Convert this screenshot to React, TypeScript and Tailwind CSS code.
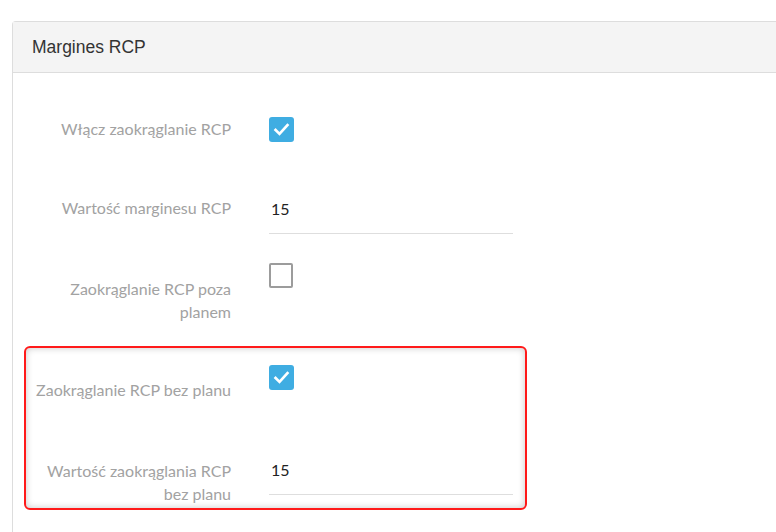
import React from "react";

const labelCls =
  "text-right text-[16px] text-[#a2a2a2] font-['Lato',sans-serif]";

const CheckMark: React.FC<{ checked: boolean }> = ({ checked }) =>
  checked ? (
    <div className="flex h-[25px] w-[25px] items-center justify-center rounded-[3px] bg-[#3fade2]">
      <svg width="19" height="19" viewBox="0 0 24 24" fill="none">
        <path
          d="M4.5 12.5 L9.5 17.5 L19.5 6.5"
          stroke="white"
          strokeWidth="3.4"
          strokeLinecap="square"
        />
      </svg>
    </div>
  ) : (
    <div className="h-[25px] w-[24px] rounded-[2px] border-2 border-[#9c9c9c] bg-white" />
  );

const ValueInput: React.FC<{ value: string; height: string }> = ({
  value,
  height,
}) => (
  <div
    className={`${height} w-[244px] border-b border-[#dedede] pl-[2px] font-['Lato',sans-serif] text-[16px] leading-[22px] text-[#222]`}
  >
    {value}
  </div>
);

export default function App() {
  return (
    <div className="h-[532px] w-[776px] overflow-hidden bg-white pl-[12px] pt-[21px]">
      <div className="h-[560px] w-[800px] rounded-tl-[4px] border-l border-t border-[#dddddd]">
        {/* header */}
        <div className="flex h-[51px] items-center border-b border-[#dddddd] bg-[#f4f4f4] pl-[19px] font-['Liberation_Sans',Arial,sans-serif] text-[17.5px] text-[#333]">
          Margines RCP
        </div>

        {/* body */}
        <div className="pt-[44px]">
          <div className="flex items-start gap-[38px] pl-[18px]">
            <div className={`${labelCls} mt-[1px] w-[200px] leading-[22px]`}>
              Włącz zaokrąglanie RCP
            </div>
            <CheckMark checked />
          </div>

          <div className="mt-[55px] flex items-start gap-[38px] pl-[18px]">
            <div className={`${labelCls} w-[200px] leading-[22px]`}>
              Wartość marginesu RCP
            </div>
            <div className="pt-[1px]">
              <ValueInput value="15" height="h-[36px]" />
            </div>
          </div>

          <div className="mt-[29px] flex items-start gap-[38px] pl-[18px]">
            <div className={`${labelCls} mt-[14px] w-[200px] leading-[23px]`}>
              Zaokrąglanie RCP poza planem
            </div>
            <CheckMark checked={false} />
          </div>

          {/* highlighted group */}
          <div className="ml-[11px] mt-[23px] w-[503px] rounded-[6px] border-2 border-[#ff1a1a] pb-[3px] pt-[17px] shadow-[inset_0_0_7px_rgba(0,0,0,0.22)]">
            <div className="flex items-start gap-[38px]">
              <div className={`${labelCls} mt-[14px] w-[205px] leading-[22px]`}>
                Zaokrąglanie RCP bez planu
              </div>
              <CheckMark checked />
            </div>

            <div className="mt-[58px] flex items-start gap-[38px]">
              <div className={`${labelCls} w-[205px] leading-[23px]`}>
                Wartość zaokrąglania RCP bez planu
              </div>
              <ValueInput value="15" height="h-[36px]" />
            </div>
          </div>
        </div>
      </div>
    </div>
  );
}
